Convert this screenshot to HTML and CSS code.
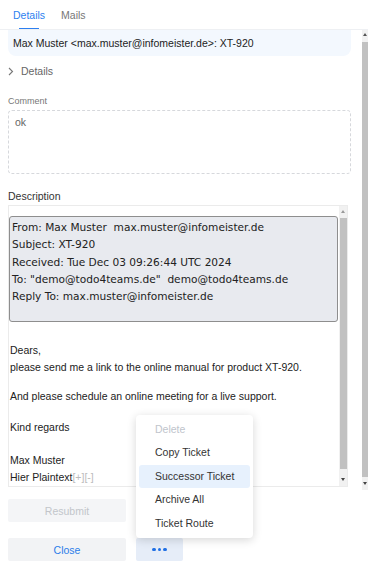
FILE: index.html
```html
<!DOCTYPE html>
<html>
<head>
<meta charset="utf-8">
<link rel="stylesheet" href="styles.css">
</head>
<body>
<div class="app">
  <div class="tabs">
    <div class="tab active"><span class="tab-label">Details</span><span class="tab-ink"></span></div>
    <div class="tab"><span class="tab-label">Mails</span><span class="tab-ink none"></span></div>
  </div>
  <div class="scroller">
    <div class="scroll-content">
      <div class="subject">Max Muster &lt;max.muster@infomeister.de&gt;: XT-920</div>
      <div class="toggle">
        <svg class="chev" width="6" height="9" viewBox="0 0 6 9"><path d="M1 1 L4.5 4.5 L1 8" fill="none" stroke="#777" stroke-width="1.1"/></svg>
        <span>Details</span>
      </div>
      <div class="label-small">Comment</div>
      <div class="comment">ok</div>
      <div class="label">Description</div>
      <div class="desc">
        <div class="desc-content">
          <div class="mailhead">
            <div>From: Max Muster&nbsp; max.muster@infomeister.de</div>
            <div>Subject: XT-920</div>
            <div>Received: Tue Dec 03 09:26:44 UTC 2024</div>
            <div>To: "demo@todo4teams.de"&nbsp; demo@todo4teams.de</div>
            <div>Reply To: max.muster@infomeister.de</div>
          </div>
          <div class="body">
            <p class="p1">Dears,<br>please send me a link to the online manual for product XT-920.</p>
            <p class="p2">And please schedule an online meeting for a live support.</p>
            <p class="p3">Kind regards</p>
            <p class="p4">Max Muster<br>Hier Plaintext<span class="pm">[+][-]</span></p>
          </div>
        </div>
        <div class="sbar inner">
          <span class="arrow up"></span>
          <span class="thumb"></span>
          <span class="arrow down"></span>
        </div>
      </div>
    </div>
    <div class="sbar outer">
      <span class="arrow up"></span>
      <span class="thumb"></span>
      <span class="arrow down"></span>
    </div>
  </div>
  <div class="actions">
    <button class="btn disabled">Resubmit</button>
    <div class="row">
      <button class="btn primary">Close</button>
      <div class="more-wrap">
        <div class="menu">
          <div class="item off">Delete</div>
          <div class="item">Copy Ticket</div>
          <div class="item hover">Successor Ticket</div>
          <div class="item">Archive All</div>
          <div class="item">Ticket Route</div>
        </div>
        <button class="btn more"><span class="dot"></span><span class="dot"></span><span class="dot"></span></button>
      </div>
    </div>
  </div>
</div>
</body>
</html>
```
FILE: styles.css
```css
* { box-sizing: border-box; }
html, body { margin: 0; padding: 0; background: #fff; }
body { font-family: "Liberation Sans", Arial, sans-serif; font-size: 10.5px; color: #333; width: 368px; height: 564px; overflow: hidden; }
.app { display: flex; flex-direction: column; height: 564px; }

.tabs { display: flex; gap: 16px; padding-left: 13px; height: 30px; border-bottom: 1px solid #eef0f3; }
.tab { display: flex; flex-direction: column; align-items: center; padding-top: 8px; color: #777; }
.tab-label { line-height: 14px; height: 14px; }
.tab-ink { width: 20px; height: 2px; margin-top: 5.5px; background: #2d7ff0; }
.tab-ink.none { background: transparent; }
.tab.active { color: #2d7ff0; }

.scroller { height: 460px; display: flex; }
.scroll-content { flex: 1; min-width: 0; overflow: hidden; padding: 0 11px 0 8px; }

.sbar { display: flex; flex-direction: column; align-items: center; background: #f1f1f1; flex: none; }
.sbar.outer { width: 6px; padding: 3px 0 5px; }
.sbar.inner { width: 8px; padding: 4px 0 5px; }
.arrow { width: 0; height: 0; border-left: 2.5px solid transparent; border-right: 2.5px solid transparent; flex: none; }
.arrow.up { border-bottom: 3px solid #555; }
.arrow.down { border-top: 3px solid #444; }
.thumb { flex: 1; align-self: stretch; background: #c1c1c1; }
.sbar.outer .thumb { margin: 6px 0 5px; }
.sbar.inner .thumb { margin: 5px 0 9px 1px; }
.sbar.inner .arrow.up { border-bottom-color: #999; }

.subject { height: 26px; line-height: 26px; padding-left: 5px; background: #f3f8fe; border-radius: 0 0 8px 8px; color: #222; white-space: nowrap; }
.toggle { height: 30px; display: flex; align-items: center; gap: 7px; color: #666; }
.chev { display: block; }
.label-small { margin-top: 10px; font-size: 9px; line-height: 10px; color: #777; }
.comment { margin-top: 4px; height: 64px; border: 1px dashed #d6d8dc; border-radius: 4px; padding: 4px 6px; line-height: 14px; color: #666; }
.label { margin-top: 14px; line-height: 16px; color: #333; }

.desc { margin-top: 1px; width: 340px; height: 282px; border: 1px solid #ebebeb; display: flex; }
.desc-content { flex: 1; min-width: 0; overflow: hidden; padding-top: 10px; }

.mailhead { margin-right: 1px; border: 1px solid #8e8e8e; border-radius: 3px; background: #e8eaef; padding: 2px 2px 15.5px; font-family: "DejaVu Sans", Verdana, sans-serif; font-size: 10.6px; line-height: 17.3px; color: #222; white-space: nowrap; }
.body { margin-top: 20px; line-height: 17.3px; color: #222; padding-left: 1px; white-space: nowrap; }
.body p { margin: 0; }
.p2 { margin-top: 11.5px !important; }
.p3 { margin-top: 13.7px !important; }
.p4 { margin-top: 15.7px !important; }
.pm { color: #bbb; }

.actions { display: flex; flex-direction: column; gap: 16px; padding: 9px 0 0 8px; }
.row { display: flex; gap: 10px; }
.btn { border: 0; margin: 0; font-family: inherit; font-size: 10.5px; height: 23px; width: 118px; border-radius: 2px; padding: 0; display: flex; align-items: center; justify-content: center; }
.btn.disabled { background: #f4f5f7; color: #c2c5ca; }
.btn.primary { background: #f2f3f5; color: #2b7de9; }
.more-wrap { position: relative; }
.btn.more { width: 47px; background: #e6edf8; gap: 2px; }
.dot { width: 3.5px; height: 3.5px; border-radius: 50%; background: #1f6fe5; }

.menu { position: absolute; left: 0; bottom: 100%; width: 117px; background: #fff; border-radius: 4px; box-shadow: 0 2px 10px rgba(0,0,0,0.16); padding: 3px 3px; z-index: 5; }
.item { height: 23.5px; line-height: 23.5px; padding-left: 16px; color: #333; border-radius: 3px; white-space: nowrap; }
.item.off { color: #c0c4cc; }
.item.hover { background: #e7f1fd; }
```
